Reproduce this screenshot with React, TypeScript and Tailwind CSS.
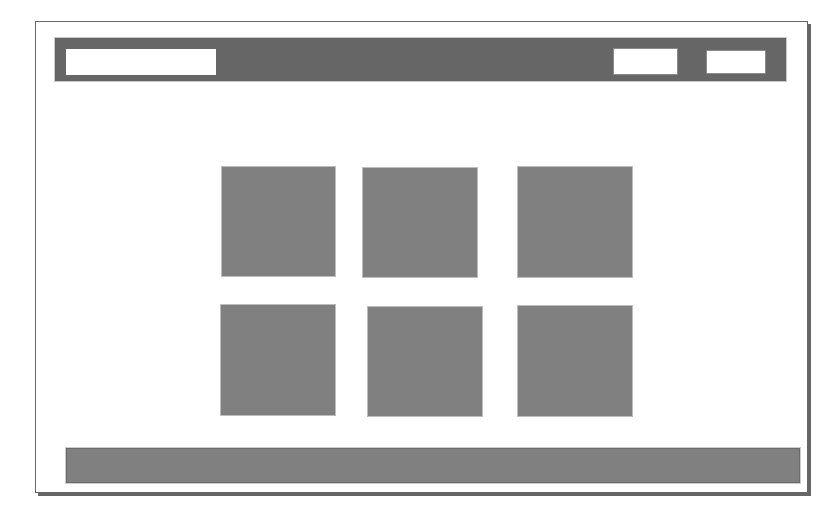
const Tile = ({ className }: { className: string }) => (
  <div className={`shrink-0 border border-[#bdbdbd] bg-[#808080] ${className}`} />
);

export default function App() {
  return (
    <div className="h-[506px] w-[828px] overflow-hidden bg-white">
      <div className="ml-[35px] mt-[21px] flex h-[472px] w-[773px] flex-col border border-[#666666] bg-white shadow-[3px_3px_0_#666666]">
        {/* top bar */}
        <div className="ml-[18px] mt-[15px] flex h-[45px] w-[733px] items-start border border-[#c8c8c8] bg-[#666666]">
          <div className="ml-[11px] mt-[11px] h-[26px] w-[150px] bg-white" />
          <div className="ml-auto mt-[10px] h-[27px] w-[65px] border border-[#8a8a8a] bg-white" />
          <div className="ml-[28px] mr-[20px] mt-[12px] h-[24px] w-[60px] border border-[#8a8a8a] bg-white" />
        </div>

        {/* grid of tiles */}
        <div className="mt-[84px] flex items-start">
          <Tile className="ml-[185px] h-[111px] w-[115px] border-[#808080]" />
          <Tile className="ml-[26px] mt-[1px] h-[111px] w-[116px]" />
          <Tile className="ml-[39px] h-[112px] w-[116px]" />
        </div>
        <div className="mt-[26px] flex items-start">
          <Tile className="ml-[184px] h-[112px] w-[116px]" />
          <Tile className="ml-[31px] mt-[2px] h-[111px] w-[116px]" />
          <Tile className="ml-[34px] mt-[1px] h-[112px] w-[116px]" />
        </div>

        {/* footer bar */}
        <div className="ml-[30px] mt-[31px] h-[35px] w-[734px] border border-[#6a6a6a] bg-[#808080] shadow-[0_0_0_1px_#cccccc]" />
      </div>
    </div>
  );
}
